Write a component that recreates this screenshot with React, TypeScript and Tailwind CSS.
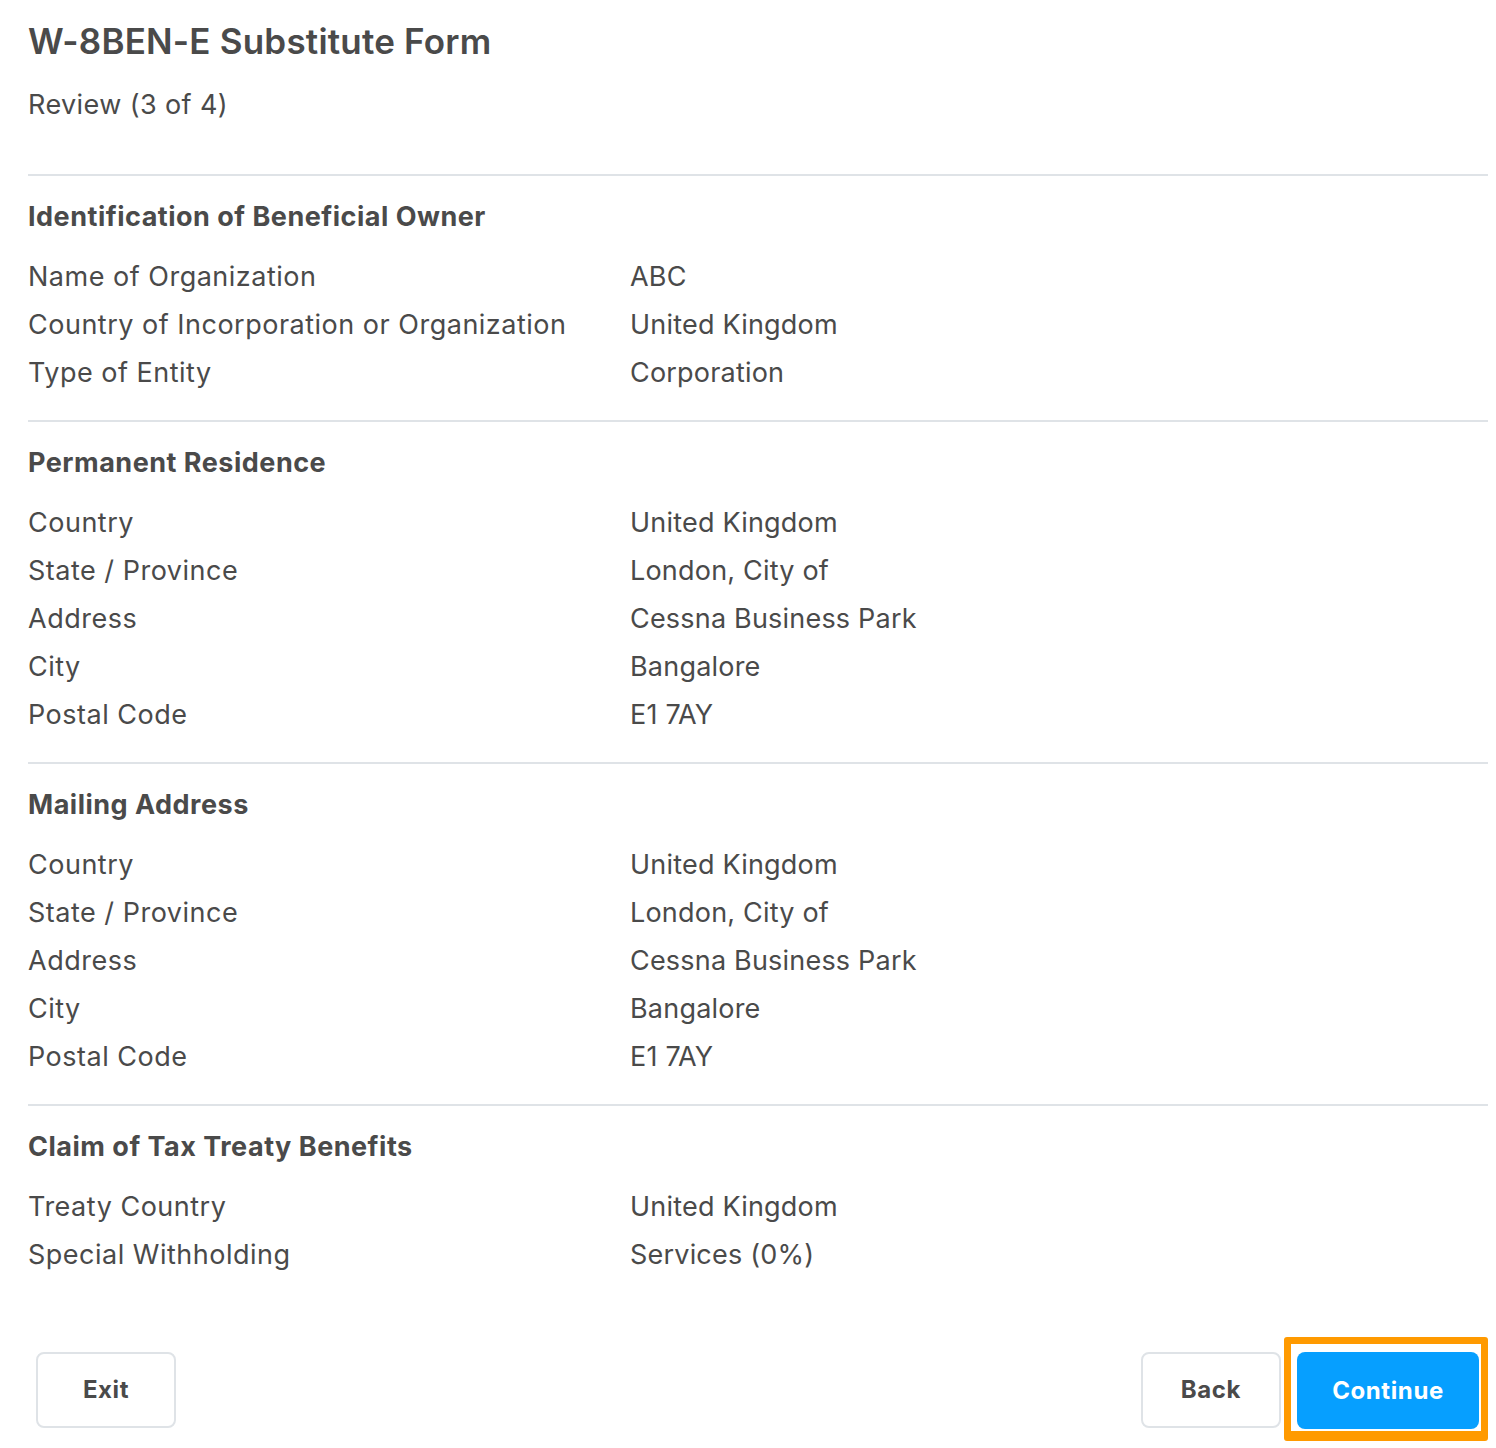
import React from "react";

type Row = { label: string; value: string };
type Section = { title: string; rows: Row[] };

const sections: Section[] = [
  {
    title: "Identification of Beneficial Owner",
    rows: [
      { label: "Name of Organization", value: "ABC" },
      { label: "Country of Incorporation or Organization", value: "United Kingdom" },
      { label: "Type of Entity", value: "Corporation" },
    ],
  },
  {
    title: "Permanent Residence",
    rows: [
      { label: "Country", value: "United Kingdom" },
      { label: "State / Province", value: "London, City of" },
      { label: "Address", value: "Cessna Business Park" },
      { label: "City", value: "Bangalore" },
      { label: "Postal Code", value: "E1 7AY" },
    ],
  },
  {
    title: "Mailing Address",
    rows: [
      { label: "Country", value: "United Kingdom" },
      { label: "State / Province", value: "London, City of" },
      { label: "Address", value: "Cessna Business Park" },
      { label: "City", value: "Bangalore" },
      { label: "Postal Code", value: "E1 7AY" },
    ],
  },
  {
    title: "Claim of Tax Treaty Benefits",
    rows: [
      { label: "Treaty Country", value: "United Kingdom" },
      { label: "Special Withholding", value: "Services (0%)" },
    ],
  },
];

export default function App() {
  return (
    <div
      className="min-h-[1448px] bg-white pl-[28px] pr-[8px] text-[#4a4a4a]"
      style={{ fontFamily: "Inter, 'Noto Sans', sans-serif" }}
    >
      <div className="pt-[19px]">
        <h1 className="text-[35px] leading-[44px] font-semibold tracking-[0.2px]">W-8BEN-E Substitute Form</h1>
        <p className="mt-[22px] text-[27px] leading-[40px] tracking-[0.4px]">Review (3 of 4)</p>
      </div>

      <div className="mt-[49px]">
        {sections.map((section) => (
          <div key={section.title} className="border-t-2 border-[#dfe3e7] pt-[24px] pb-[23px]">
            <h2 className="text-[27px] leading-[34px] font-bold tracking-[0.5px] mb-[19px]">{section.title}</h2>
            {section.rows.map((row) => (
              <div key={row.label} className="flex items-center h-[48px] text-[27px]">
                <div className="w-[602px] shrink-0 tracking-[0.5px]">{row.label}</div>
                <div className="tracking-[0.2px]">{row.value}</div>
              </div>
            ))}
          </div>
        ))}
      </div>

      <div className="flex items-start justify-between mt-[35px]">
        <button className="ml-[8px] mt-[15px] w-[140px] h-[76px] rounded-lg border-2 border-[#dfe3e7] bg-white text-[24px] font-bold tracking-wide text-[#4a4a4a]">
          Exit
        </button>
        <div className="flex items-start">
          <button className="mt-[15px] w-[140px] h-[76px] rounded-lg border-2 border-[#dfe3e7] bg-white text-[24px] font-bold tracking-wide text-[#4a4a4a]">
            Back
          </button>
          <div className="ml-[3px] rounded-[3px] border-t-[7px] border-l-[7px] border-r-[7px] border-b-[10px] border-[#ff9a00] pt-[8px] pl-[6px] pr-[2px] pb-[2px]">
            <button className="w-[182px] h-[77px] rounded-lg bg-[#069fff] text-[24px] font-bold tracking-wide text-white">
              Continue
            </button>
          </div>
        </div>
      </div>
    </div>
  );
}
